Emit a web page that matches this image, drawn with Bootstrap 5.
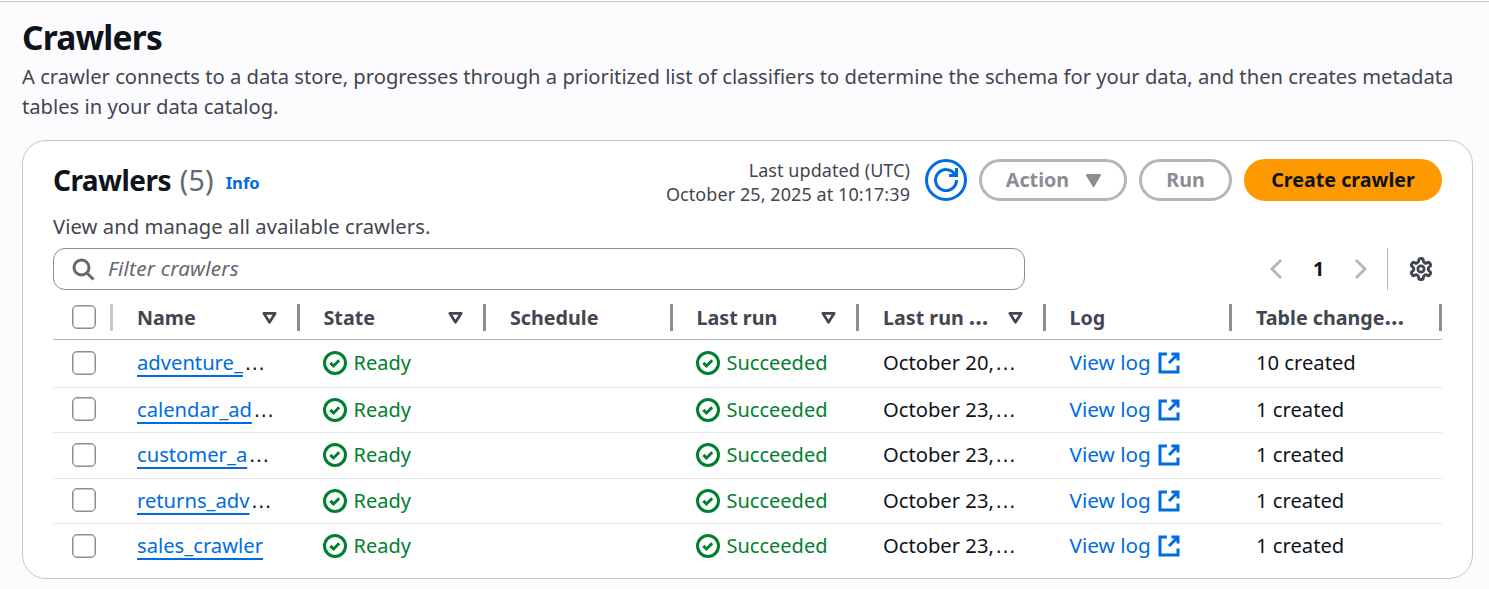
<!DOCTYPE html>
<html lang="en">
<head>
<meta charset="utf-8">
<meta name="viewport" content="width=device-width, initial-scale=1">
<title>Crawlers</title>
<link rel="stylesheet" href="https://cdn.jsdelivr.net/npm/bootstrap@5.3.0/dist/css/bootstrap.min.css">
<style>
  :root { --ink: #0f141a; --ink-2: #424650; --muted: #656871; --link: #006ce0; --ok: #00802f; --line: #c6c6cd; --grey: #8c8c94; }
  body { background: #fcfcfe; color: #0f141a; font-family: "Noto Sans", "Open Sans", sans-serif; font-size: 20.2px; line-height: 30px; overflow: hidden; }
  svg { fill: none; stroke: currentColor; stroke-width: 2; flex: none; display: block; }
  .ic { width: 24px; height: 24px; }
  .page { padding: 17px 16px 0 22px; border-top: 1px solid var(--line); margin-top: 1px; }
  .page-title { font-size: 33.5px; line-height: 36px; font-weight: 700; margin: 0 0 6px; letter-spacing: -.8px; }
  .page-text { color: var(--ink-2); margin: 0; white-space: nowrap; }
  .panel { border: 1px solid var(--line); border-radius: 24px; background: #fff; margin-top: 19px; height: 439px; padding: 18px 30px 0; }
  .panel-head { height: 42px; }
  .panel-title { font-size: 28px; line-height: 36px; font-weight: 700; margin: 0; letter-spacing: -.55px; }
  .count { font-weight: 400; color: var(--muted); font-size: 28.5px; letter-spacing: .2px; margin-left: 2px; }
  .info { font-size: 16.6px; font-weight: 700; color: var(--link); padding-top: 6px; margin-left: 12px; }
  .updated { font-size: 18px; line-height: 24px; color: var(--ink-2); margin-top: 3px; letter-spacing: .07px; }
  .pill { height: 42px; border: 3px solid #b4b4bb; border-radius: 21px; color: var(--grey); font-weight: 700; font-size: 19.7px; line-height: 36px; padding: 0; display: flex; align-items: center; justify-content: center; background: none; }
  .pill-round { width: 42px; border-color: var(--link); color: var(--link); }
  .pill-action { width: 148px; padding-left: 2px; }
  .pill-run { width: 93px; }
  .pill-main { width: 198px; background: #ff9900; border-color: #ff9900; color: var(--ink); }
  .filter { width: 972px; height: 42px; border: 1px solid var(--grey); border-radius: 12px; padding: 0 17px; gap: 13px; color: var(--muted); }
  .filter input { border: 0; outline: 0; background: none; padding: 0 0 2px; font-style: italic; font-size: 20.6px; letter-spacing: .22px; }
  .filter input::placeholder { color: var(--muted); opacity: 1; }
  .grid-table { table-layout: fixed; width: 1389px; border-collapse: separate; border-spacing: 0; margin-top: 1px; }
  .grid-table th, .grid-table td { padding: 0 0 0 24px; white-space: nowrap; border-bottom: 1px solid #e4e6ec; vertical-align: middle; }
  .grid-table td { padding-bottom: 2.6px; }
  .grid-table th { height: 49px; border-color: #b4b4bb; color: var(--ink-2); font-size: 19.7px; padding-top: 5px; }
  .grid-table td { height: 45.4px; }
  .grid-table .r1 td { height: 48px; }
  .grid-table tr:last-child td { border: 0; padding-bottom: 3.6px; }
  .grid-table tr > :first-child { padding-left: 19px; }
  .sep { width: 3px; height: 27px; background: var(--grey); margin-left: auto; }
  .sort { margin-left: auto; }
  .sort + .sep { margin-left: 20px; }
  .tick { appearance: none; width: 24px; height: 24px; border: 1.5px solid #8c8c94; border-radius: 5px; background: #fff; margin: 0; display: block; box-shadow: inset 0 0 0 .5px #8c8c94; }
  td .tick { margin-top: 1px; }
  .ulink { color: var(--link); text-decoration: underline 2px; text-underline-offset: 5px; text-decoration-skip-ink: none; }
  .dots { font-size: 23px; line-height: 20px; }
  td .dots { font-family: "Liberation Sans", sans-serif; font-size: 21.5px; margin-left: 1px; }
  .ok { color: var(--ok); gap: 7px; font-size: 20px; margin-left: -1px; padding-top: 2px; }
  .vlog { color: var(--link); text-decoration: none; font-size: 20.7px; gap: 6.5px; }
  .vlog svg { margin-top: 2px; }
</style>
</head>
<body>
<svg width="0" height="0" class="d-none" aria-hidden="true">
  <symbol id="i-ok" viewBox="0 0 16 16"><circle cx="8" cy="8" r="7"/><path d="m4.900 7.900 2.100 2.100 3.800-3.800"/></symbol>
  <symbol id="i-ext" viewBox="0 0 16 16"><path d="M9.600 2H14v4.400M14 2 8 8M14 9.600V14H2V2h4.600"/></symbol>
  <symbol id="i-sort" viewBox="0 0 15 13"><path stroke-width="2.700" stroke-linejoin="round" d="M1.800 2.300h11.400L7.500 11.300z"/></symbol>
</svg>
<main class="page">
  <h1 class="page-title">Crawlers</h1>
  <p class="page-text">A crawler connects to a data store, progresses through a prioritized list of classifiers to determine the schema for your data, and then creates metadata<br>tables in your data catalog.</p>

  <section class="panel">
    <div class="panel-head d-flex align-items-center">
      <h2 class="panel-title">Crawlers <span class="count">(5)</span></h2>
      <a class="info text-decoration-none">Info</a>
      <div class="updated text-end ms-auto">Last updated (UTC)<br>October 25, 2025 at 10:17:39</div>
      <div class="d-flex" style="gap:12px;margin-left:15px">
        <button class="pill pill-round" aria-label="Refresh"><svg class="ic" viewBox="0 0 16 16"><path d="M10 5h5V0M15 8a7 7 0 1 1-.7-3"/></svg></button>
        <button class="pill pill-action">Action <svg class="ms-3" width="17" height="13" viewBox="0 0 17 13"><path fill="currentColor" stroke-linejoin="round" d="M2 1h13L8.500 12z"/></svg></button>
        <button class="pill pill-run">Run</button>
        <button class="pill pill-main">Create crawler</button>
      </div>
    </div>
    <p class="page-text" style="margin:10px 0 7px;letter-spacing:.07px">View and manage all available crawlers.</p>
    <div class="d-flex align-items-center">
      <div class="filter d-flex align-items-center">
        <svg class="ic" viewBox="0 0 16 16"><circle cx="7" cy="7" r="5"/><path d="m15 15-4.500-4.500"/></svg>
        <input type="text" placeholder="Filter crawlers" class="flex-grow-1">
      </div>
      <nav class="d-flex align-items-center ms-auto" style="color:#b4b4bb">
        <svg width="12" height="20" viewBox="0 0 12 20"><path stroke-width="2.800" d="M11 1 2 10l9 9"/></svg>
        <b class="text-center" style="width:73px;color:var(--ink);font-size:19.600px">1</b>
        <svg width="12" height="20" viewBox="0 0 12 20"><path stroke-width="2.800" d="m1 1 9 9-9 9"/></svg>
      </nav>
      <div style="width:1px;height:42px;background:#b4b4bb;margin:0 21px 0 20px"></div>
      <svg class="ic" style="color:var(--ink-2);margin-right:9px" viewBox="0.6 0.6 22.8 22.8" stroke-linejoin="round"><path stroke-width="2.800" d="M12.22 2h-.44a2 2 0 0 0-2 2v.18a2 2 0 0 1-1 1.730l-.43.25a2 2 0 0 1-2 0l-.15-.08a2 2 0 0 0-2.730.73l-.22.38a2 2 0 0 0 .73 2.730l.15.1a2 2 0 0 1 1 1.720v.51a2 2 0 0 1-1 1.740l-.15.09a2 2 0 0 0-.73 2.730l.22.38a2 2 0 0 0 2.730.73l.15-.08a2 2 0 0 1 2 0l.43.25a2 2 0 0 1 1 1.730V20a2 2 0 0 0 2 2h.44a2 2 0 0 0 2-2v-.18a2 2 0 0 1 1-1.730l.43-.25a2 2 0 0 1 2 0l.15.08a2 2 0 0 0 2.730-.73l.22-.39a2 2 0 0 0-.73-2.730l-.15-.08a2 2 0 0 1-1-1.740v-.5a2 2 0 0 1 1-1.740l.15-.09a2 2 0 0 0 .73-2.730l-.22-.38a2 2 0 0 0-2.730-.73l-.15.08a2 2 0 0 1-2 0l-.43-.25a2 2 0 0 1-1-1.730V4a2 2 0 0 0-2-2z"/><circle cx="12" cy="12" r="3" stroke-width="2.600"/></svg>
    </div>

    <table class="grid-table">
      <colgroup><col style="width:60px"><col style="width:186.500px"><col style="width:186.500px"><col style="width:186.500px"><col style="width:186.500px"><col style="width:186.500px"><col style="width:186.500px"><col style="width:210px"></colgroup>
      <thead><tr id="head"><th><div class="d-flex align-items-center"><input type="checkbox" class="tick" style="margin-top:-2px"><span class="sep" style="background:#c6c6cd"></span></div></th></tr></thead>
      <tbody id="rows"></tbody>
    </table>
  </section>
</main>
<script src="https://cdn.jsdelivr.net/npm/bootstrap@5.3.0/dist/js/bootstrap.bundle.min.js"></script>
<script>
  const cols = [["Name", 1], ["State", 1], ["Schedule", 0], ["Last run", 1], ["Last run …", 1], ["Log", 0], ["Table change…", 0]];
  const data = [["adventure_", 1, "October 20,", "10 created"], ["calendar_ad", 1, "October 23,", "1 created"], ["customer_a", 1, "October 23,", "1 created"], ["returns_adv", 1, "October 23,", "1 created"], ["sales_crawler", 0, "October 23,", "1 created"]];
  const dots = '<span class="dots">…</span>';
  const sort = '<svg class="sort" width="15" height="13"><use href="#i-sort"/></svg>';
  const status = t => `<span class="ok d-flex align-items-center"><svg class="ic"><use href="#i-ok"/></svg>${t}</span>`;
  document.getElementById("head").insertAdjacentHTML("beforeend", cols.map(([t, s]) =>
    `<th><div class="d-flex align-items-center"><span>${t.replace("…", dots)}</span>${s ? sort : ""}<span class="sep"></span></div></th>`).join(""));
  document.getElementById("rows").innerHTML = data.map(([n, cut, date, made], i) =>
    `<tr class="${i ? "" : "r1"}"><td><input type="checkbox" class="tick"></td><td><a class="ulink">${n}</a>${cut ? dots : ""}</td><td>${status("Ready")}</td><td></td><td>${status("Succeeded")}</td><td>${date}${dots}</td><td><a class="vlog d-flex align-items-center">View log<svg class="ic"><use href="#i-ext"/></svg></a></td><td>${made}</td></tr>`).join("");
</script>
</body>
</html>
